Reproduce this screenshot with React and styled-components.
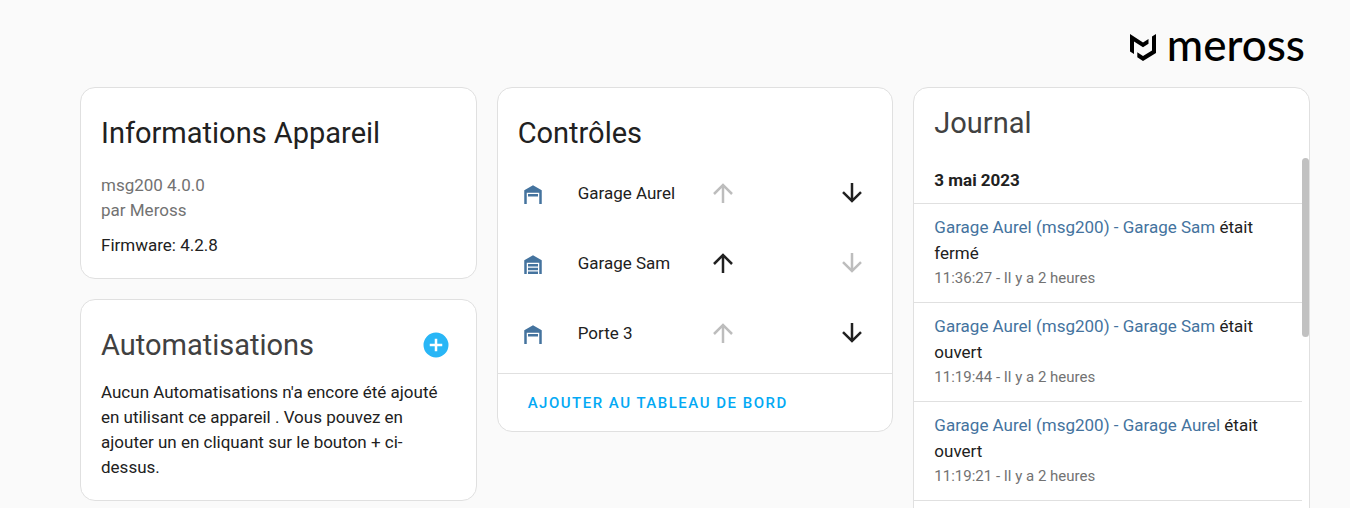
import React from "react";
import styled, { createGlobalStyle, ThemeProvider } from "styled-components";

const theme = {
  colors: {
    background: "#fafafa",
    card: "#ffffff",
    divider: "#e0e0e0",
    text: "#212121",
    title: "#414141",
    secondary: "#727272",
    disabled: "#bdbdbd",
    state: "#44739e",
    primary: "#03a9f4",
    add: "#29b6f6",
    thumb: "#c1c1c1",
  },
  fontSizes: {
    small: "15px",
    medium: "17px",
    large: "29px",
  },
};

const GlobalStyle = createGlobalStyle`
  * {
    box-sizing: border-box;
  }
  body {
    margin: 0;
    background-color: ${theme.colors.background};
    color: ${theme.colors.text};
    font-family: Roboto, "Noto Sans", sans-serif;
    font-size: ${theme.fontSizes.medium};
    line-height: 25px;
  }
  h1, h2, p, ul {
    margin: 0;
    padding: 0;
  }
  button {
    font-family: inherit;
    border: none;
    background: none;
    padding: 0;
    cursor: pointer;
  }
`;

const Page = styled.main`
  height: 100vh;
  overflow: hidden;
  padding: 0 40px 0 80px;
`;

const Header = styled.header`
  display: flex;
  justify-content: flex-end;
  align-items: center;
  height: 87px;
  padding: 8px 5px 0 0;
`;

const Brand = styled.a`
  display: flex;
  align-items: center;
  gap: 10px;
  color: #000;
  text-decoration: none;
`;

const Wordmark = styled.span`
  font-family: Lato, sans-serif;
  font-size: 44px;
  font-weight: 500;
  line-height: 48px;
  padding-bottom: 8px;
`;

const Columns = styled.div`
  display: grid;
  grid-template-columns: repeat(3, minmax(0, 1fr));
  align-items: start;
  gap: 20px;
`;

const Column = styled.div`
  display: flex;
  flex-direction: column;
  gap: 20px;
`;

const Card = styled.section`
  position: relative;
  overflow: hidden;
  background-color: ${(props) => props.theme.colors.card};
  border: 1px solid ${(props) => props.theme.colors.divider};
  border-radius: 15px;
`;

const CardHeader = styled.div`
  display: flex;
  align-items: center;
  justify-content: space-between;
  padding: ${(props) => (props.$compact ? "5px 20px" : "15px 20px 0")};
`;

const CardTitle = styled.h2`
  font-size: ${(props) => props.theme.fontSizes.large};
  font-weight: 400;
  line-height: 60px;
  color: ${(props) => props.theme.colors[props.$muted ? "title" : "text"]};
`;

const CardContent = styled.div`
  padding: ${(props) => (props.$dense ? "5px" : "10px")} 20px 20px;
`;

const Secondary = styled.p`
  color: ${(props) => props.theme.colors.secondary};
`;

const Firmware = styled.p`
  padding-top: 10px;
`;

const AddButton = styled.button`
  display: flex;
  align-items: center;
  justify-content: center;
  width: 40px;
  height: 40px;
  color: ${(props) => props.theme.colors.add};
`;

const Entities = styled.ul`
  display: grid;
  gap: 20px;
  padding: 5px 10px 15px 20px;
  list-style: none;
`;

const Entity = styled.li`
  display: flex;
  align-items: center;
  height: 50px;
`;

const EntityIcon = styled.span`
  display: flex;
  padding-top: 2px;
  margin-right: 30px;
  color: ${(props) => props.theme.colors.state};
`;

const EntityName = styled.span`
  flex: 1;
`;

const CoverButtons = styled.div`
  display: flex;
  gap: 69px;
`;

const CoverButton = styled.button`
  display: flex;
  align-items: center;
  justify-content: center;
  width: 60px;
  height: 50px;
  color: ${(props) => props.theme.colors.text};
  &:disabled {
    color: ${(props) => props.theme.colors.disabled};
    cursor: default;
  }
`;

const CardActions = styled.div`
  padding: 6px 20px;
  border-top: 1px solid ${(props) => props.theme.colors.divider};
`;

const TextButton = styled.button`
  height: 45px;
  padding: 0 10px;
  color: ${(props) => props.theme.colors.primary};
  font-size: ${(props) => props.theme.fontSizes.small};
  font-weight: 500;
  letter-spacing: 0.1em;
  text-transform: uppercase;
`;

const Logbook = styled.div`
  position: relative;
`;

const Entries = styled.div`
  height: 480px;
  margin-right: 7px;
  overflow: hidden;
`;

const ScrollThumb = styled.div`
  position: absolute;
  top: 0;
  right: 0;
  width: 7px;
  height: 179px;
  border-radius: 4px;
  background-color: ${(props) => props.theme.colors.thumb};
`;

const LogDate = styled.p`
  padding: 10px 20px;
  font-weight: 700;
  border-bottom: 1px solid ${(props) => props.theme.colors.divider};
`;

const Entry = styled.div`
  padding: 10px 20px 12px;
  line-height: 26px;
  border-bottom: 1px solid ${(props) => props.theme.colors.divider};
`;

const EntryLink = styled.a`
  color: ${(props) => props.theme.colors.state};
  text-decoration: none;
`;

const EntryTime = styled.p`
  color: ${(props) => props.theme.colors.secondary};
  font-size: ${(props) => props.theme.fontSizes.small};
  line-height: 24px;
`;

const icons = {
  garage:
    "M19,20H17V11H7V20H5V9L12,5L19,9V20M8,12H16V14H8V12M8,15H16V17H8V15M16,18V20H8V18H16Z",
  garageOpen: "M19,20H17V11H7V20H5V9L12,5L19,9V20M8,12H16V14H8V12Z",
  arrowUp:
    "M13,20H11V8L5.5,13.5L4.08,12.08L12,4.16L19.92,12.08L18.5,13.5L13,8V20Z",
  arrowDown:
    "M11,4H13V16L18.5,10.5L19.92,11.92L12,19.84L4.08,11.92L5.5,10.5L11,16V4Z",
  plusCircle:
    "M17,13H13V17H11V13H7V11H11V7H13V11H17M12,2A10,10 0 0,0 2,12A10,10 0 0,0 12,22A10,10 0 0,0 22,12A10,10 0 0,0 12,2Z",
};

const Icon = ({ name }) => (
  <svg width="30" height="30" viewBox="0 0 24 24" aria-hidden="true">
    <path d={icons[name]} fill="currentColor" />
  </svg>
);

const BrandMark = () => (
  <svg width="27" height="27" viewBox="0 0 27 27" aria-hidden="true">
    <path
      d="M0 0L13 8.5L18.5 5V9.7L13 13.3L4 7.4V20L0 17.5Z"
      fill="currentColor"
    />
    <path
      d="M26 0V19L13 27L7.3 23.2V18.3L13 22L22 16.5V2.5Z"
      fill="currentColor"
    />
  </svg>
);

const covers = [
  { name: "Garage Aurel", open: true },
  { name: "Garage Sam", open: false },
  { name: "Porte 3", open: true },
];

const entries = [
  { name: "Garage Sam", state: "fermé", time: "11:36:27" },
  { name: "Garage Sam", state: "ouvert", time: "11:19:44" },
  { name: "Garage Aurel", state: "ouvert", time: "11:19:21" },
];

const DeviceInfo = () => (
  <Card>
    <CardHeader>
      <CardTitle>Informations Appareil</CardTitle>
    </CardHeader>
    <CardContent>
      <Secondary>msg200 4.0.0</Secondary>
      <Secondary>par Meross</Secondary>
      <Firmware>Firmware: 4.2.8</Firmware>
    </CardContent>
  </Card>
);

const Automations = () => (
  <Card>
    <CardHeader>
      <CardTitle $muted>Automatisations</CardTitle>
      <AddButton type="button" aria-label="Ajouter une automatisation">
        <Icon name="plusCircle" />
      </AddButton>
    </CardHeader>
    <CardContent $dense>
      <p>
        Aucun Automatisations n'a encore été ajouté en utilisant ce appareil .
        Vous pouvez en ajouter un en cliquant sur le bouton + ci-dessus.
      </p>
    </CardContent>
  </Card>
);

const Controls = () => (
  <Card>
    <CardHeader>
      <CardTitle>Contrôles</CardTitle>
    </CardHeader>
    <Entities>
      {covers.map(({ name, open }) => (
        <Entity key={name}>
          <EntityIcon>
            <Icon name={open ? "garageOpen" : "garage"} />
          </EntityIcon>
          <EntityName>{name}</EntityName>
          <CoverButtons>
            <CoverButton
              type="button"
              disabled={open}
              aria-label={`Ouvrir ${name}`}
            >
              <Icon name="arrowUp" />
            </CoverButton>
            <CoverButton
              type="button"
              disabled={!open}
              aria-label={`Fermer ${name}`}
            >
              <Icon name="arrowDown" />
            </CoverButton>
          </CoverButtons>
        </Entity>
      ))}
    </Entities>
    <CardActions>
      <TextButton type="button">Ajouter au tableau de bord</TextButton>
    </CardActions>
  </Card>
);

const Journal = () => (
  <Card>
    <CardHeader $compact>
      <CardTitle $muted>Journal</CardTitle>
    </CardHeader>
    <Logbook>
      <Entries>
        <LogDate>3 mai 2023</LogDate>
        {entries.map(({ name, state, time }) => (
          <Entry key={time}>
            <p>
              <EntryLink href="#">Garage Aurel (msg200) - {name}</EntryLink>{" "}
              était {state}
            </p>
            <EntryTime>{time} - Il y a 2 heures</EntryTime>
          </Entry>
        ))}
      </Entries>
      <ScrollThumb />
    </Logbook>
  </Card>
);

const App = () => (
  <ThemeProvider theme={theme}>
    <GlobalStyle />
    <Page>
      <Header>
        <Brand href="#">
          <BrandMark />
          <Wordmark>meross</Wordmark>
        </Brand>
      </Header>
      <Columns>
        <Column>
          <DeviceInfo />
          <Automations />
        </Column>
        <Controls />
        <Journal />
      </Columns>
    </Page>
  </ThemeProvider>
);

export default App;
